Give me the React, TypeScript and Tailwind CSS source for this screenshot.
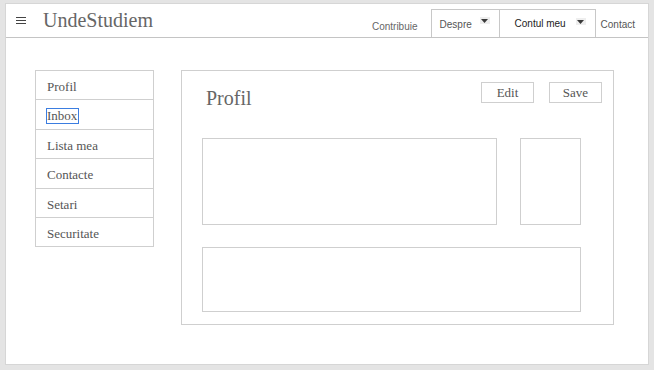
const serif = "font-['Liberation_Serif','Times_New_Roman',serif]";
const sans = "font-['Liberation_Sans',Arial,sans-serif]";

function Caret() {
  return (
    <span className="flex h-[7px] w-[10px] items-center justify-center bg-[#eeeeee]">
      <svg width="7" height="4" viewBox="0 0 7 4">
        <path d="M0 0h7L3.5 4z" fill="#3a3a3a" />
      </svg>
    </span>
  );
}

const menu = ["Profil", "Inbox", "Lista mea", "Contacte", "Setari", "Securitate"];

export default function App() {
  return (
    <div className="h-[370px] w-[654px] bg-[#e4e4e4] pl-[5px] pt-[3px]">
      <div className="flex h-[362px] w-[644px] flex-col border border-[#d6d6d6] bg-white">
        <header className="flex h-[34px] items-stretch border-b border-[#c4c4c4]">
          <div className="flex items-center pl-[10px]">
            <div className="flex w-[10px] flex-col gap-[1.5px]">
              <span className="h-[1.5px] bg-[#444]" />
              <span className="h-[1.5px] bg-[#444]" />
              <span className="h-[1.5px] bg-[#444]" />
            </div>
          </div>
          <div className={`ml-[17px] flex items-center pb-[2px] text-[20px] text-[#666] ${serif}`}>UndeStudiem</div>
          <nav className={`ml-auto flex items-end text-[10px] text-[#555] ${sans}`}>
            <span className="mb-[3px] mr-[13px] text-[#666]">Contribuie</span>
            <div className="flex h-[28px] w-[69px] items-start border-x border-t border-[#c8c8c8] pl-[8px] pt-[6px]">
              <span className="mt-[1px]">Despre</span>
              <span className="ml-auto mr-[9px] mt-[1px]">
                <Caret />
              </span>
            </div>
            <div className="flex h-[28px] w-[96px] items-start border-r border-t border-[#c8c8c8] pl-[15px] pt-[6px] text-[#222]">
              <span>Contul meu</span>
              <span className="ml-auto mr-[9px] mt-[2px]">
                <Caret />
              </span>
            </div>
            <span className="mb-[5px] ml-[5px] mr-[13px]">Contact</span>
          </nav>
        </header>

        <div className={`flex items-start pl-[29px] pt-[32px] ${serif}`}>
          <aside className="w-[119px] border border-b-0 border-[#cfcfcf]">
            {menu.map((m) => (
              <div key={m} className="flex h-[29.4px] items-center border-b border-[#cfcfcf] pl-[11px] pt-[3px] text-[13px] text-[#555]">
                {m === "Inbox" ? (
                  <span className="-ml-[1px] border border-[#3b7de0] pr-[1px] leading-[14px]">{m}</span>
                ) : (
                  m
                )}
              </div>
            ))}
          </aside>

          <main className="ml-[27px] flex h-[255px] w-[433px] flex-col border border-[#cfcfcf] pl-[20px]">
            <div className="flex h-[67px] items-start">
              <h1 className="ml-[4px] mt-[12px] text-[20px] text-[#666]">Profil</h1>
              <div className="ml-auto mr-[11px] mt-[11px] flex gap-[15px]">
                <button className="h-[21px] w-[53px] border border-[#cfcfcf] text-[13px] text-[#555]">Edit</button>
                <button className="h-[21px] w-[53px] border border-[#cfcfcf] text-[13px] text-[#555]">Save</button>
              </div>
            </div>
            <div className="flex gap-[23px]">
              <div className="h-[87px] w-[295px] border border-[#cfcfcf]" />
              <div className="h-[87px] w-[61px] border border-[#cfcfcf]" />
            </div>
            <div className="mt-[22px] h-[65px] w-[379px] border border-[#cfcfcf]" />
          </main>
        </div>
      </div>
    </div>
  );
}
